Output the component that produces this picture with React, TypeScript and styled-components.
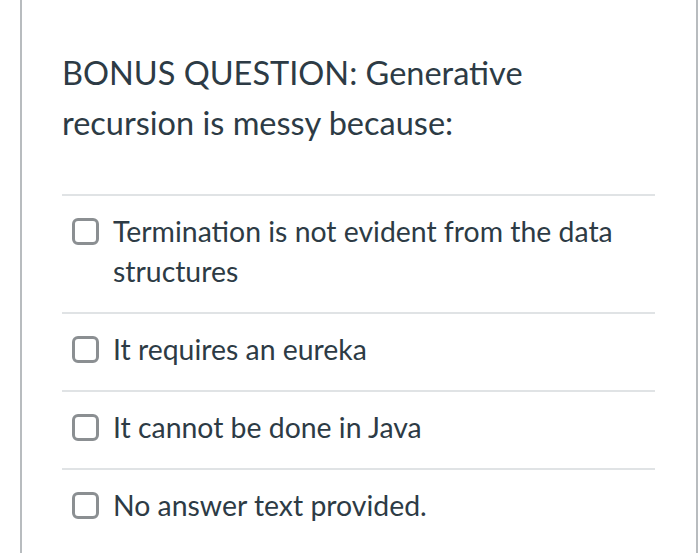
import styled, { createGlobalStyle } from "styled-components";

const GlobalStyle = createGlobalStyle`
  html, body {
    margin: 0;
    padding: 0;
    background: #ffffff;
  }
  body {
    font-family: Lato, "Noto Sans", "Liberation Sans", sans-serif;
    color: #2d3b45;
  }
`;

const Page = styled.div`
  width: 700px;
  height: 553px;
  overflow: hidden;
  background: #ffffff;
  padding-left: 20px;
  box-sizing: border-box;
`;

const Card = styled.div`
  width: 678px;
  min-height: 553px;
  box-sizing: border-box;
  border-left: 2px solid #b8bcbf;
  border-right: 2px solid #b8bcbf;
  padding: 48px 41px 0 40px;
`;

const Question = styled.div`
  font-size: 32.5px;
  line-height: 50px;
  padding-bottom: 46px;
  border-bottom: 2px solid #e0e3e5;
`;

const AnswerRow = styled.label<{ $last?: boolean }>`
  display: flex;
  align-items: flex-start;
  gap: 14px;
  padding: 15px 0 21px 10px;
  border-bottom: ${(p) => (p.$last ? "none" : "2px solid #e0e3e5")};
`;

const Box = styled.span`
  flex: none;
  width: 21px;
  height: 21px;
  margin-top: 7px;
  border: 3px solid #8b8f92;
  border-radius: 6px;
  background: #ffffff;
`;

const AnswerText = styled.span`
  font-size: 28.4px;
  line-height: 40px;
`;

const answers = [
  "Termination is not evident from the data structures",
  "It requires an eureka",
  "It cannot be done in Java",
  "No answer text provided.",
];

export default function App() {
  return (
    <Page>
      <GlobalStyle />
      <Card>
        <Question>BONUS QUESTION: Generative recursion is messy because:</Question>
        {answers.map((a, i) => (
          <AnswerRow key={i} $last={i === answers.length - 1}>
            <Box />
            <AnswerText>{a}</AnswerText>
          </AnswerRow>
        ))}
      </Card>
    </Page>
  );
}
